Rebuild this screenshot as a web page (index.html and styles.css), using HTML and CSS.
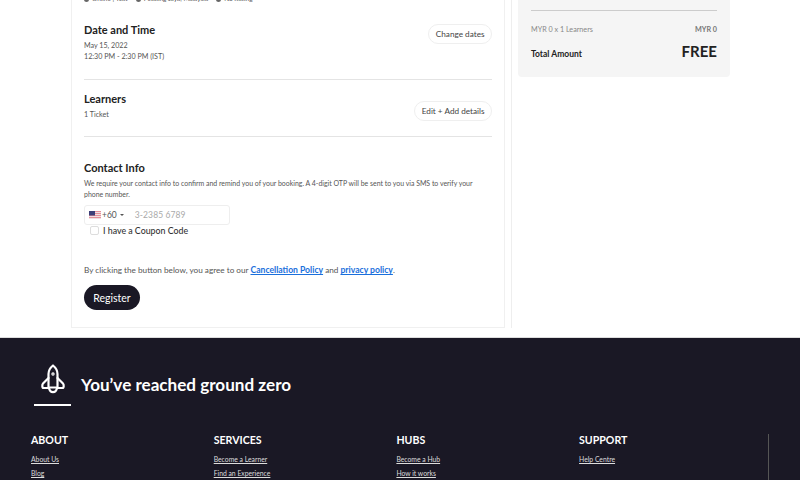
FILE: index.html
```html
<!DOCTYPE html>
<html lang="en">
<head>
<meta charset="utf-8">
<title>Booking</title>
<link rel="stylesheet" href="styles.css">
</head>
<body>
<div class="page">
  <main class="booking">
    <section class="form-card">
      <div class="meta">
        <span class="meta-item"><i class="dot"></i>Online | Text</span>
        <span class="meta-item"><i class="dot"></i>Petaling Jaya, Malaysia</span>
        <span class="meta-item"><i class="dot"></i>No Rating</span>
      </div>
      <div class="block block-date">
        <div>
          <h2>Date and Time</h2>
          <p class="small">May 15, 2022</p>
          <p class="small">12:30 PM - 2:30 PM (IST)</p>
        </div>
        <a class="pill pill-date">Change dates</a>
      </div>
      <div class="block block-learners">
        <div>
          <h2>Learners</h2>
          <p class="small ticket">1 Ticket</p>
        </div>
        <a class="pill pill-edit">Edit + Add details</a>
      </div>
      <div class="contact">
        <h2>Contact Info</h2>
        <p class="small note">We require your contact info to confirm and remind you of your booking. A 4-digit OTP will be sent to you via SMS to verify your phone number.</p>
        <div class="phone">
          <svg class="flag" width="12" height="8" viewBox="0 0 12 8" aria-hidden="true">
            <rect width="12" height="8" fill="#e58f99"/>
            <rect y="1" width="12" height="1" fill="#f3dfe0"/>
            <rect y="3" width="12" height="1" fill="#f3dfe0"/>
            <rect y="5" width="12" height="1" fill="#f3dfe0"/>
            <rect y="7" width="12" height="1" fill="#f3dfe0"/>
            <rect width="6" height="4.5" fill="#3d3f78"/>
          </svg>
          <span class="code">+60</span>
          <span class="caret"></span>
          <span class="placeholder">3-2385 6789</span>
        </div>
        <label class="coupon"><span class="box"></span>I have a Coupon Code</label>
        <p class="agree">By clicking the button below, you agree to our <a>Cancellation Policy</a> and <a>privacy policy</a>.</p>
        <button class="register" type="button">Register</button>
      </div>
    </section>
    <aside class="side">
      <div class="summary">
        <hr>
        <div class="row line">
          <span>MYR 0 x 1 Learners</span>
          <b>MYR 0</b>
        </div>
        <div class="row total">
          <b>Total Amount</b>
          <strong>FREE</strong>
        </div>
      </div>
    </aside>
  </main>
  <footer class="footer">
    <div class="brand">
      <div class="logo">
        <svg width="26" height="31" viewBox="0 0 26 31" fill="none" stroke="#fff" stroke-width="2.200" stroke-linejoin="round" stroke-linecap="round" aria-hidden="true">
          <path d="M13 1.500 C10.500 3.500 8.500 6.500 8.500 10 V23.500 H17.500 V10 C17.500 6.500 15.500 3.500 13 1.500 Z"/>
          <path d="M8.500 14 L3 19.500 C2 20.500 2 24 3.500 24 H8.500"/>
          <path d="M17.500 14 L23 19.500 C24 20.500 24 24 22.500 24 H17.500"/>
          <path d="M9 24 C10 29.500 16 29.500 17 24"/>
          <circle cx="13" cy="10" r="0.6"/>
        </svg>
        <span class="underline"></span>
      </div>
      <h1>You’ve reached ground zero</h1>
    </div>
    <nav class="links">
      <div class="col">
        <h3>ABOUT</h3>
        <a>About Us</a>
        <a>Blog</a>
      </div>
      <div class="col">
        <h3>SERVICES</h3>
        <a>Become a Learner</a>
        <a>Find an Experience</a>
      </div>
      <div class="col">
        <h3>HUBS</h3>
        <a>Become a Hub</a>
        <a>How it works</a>
      </div>
      <div class="col col-last">
        <h3>SUPPORT</h3>
        <a>Help Centre</a>
      </div>
    </nav>
  </footer>
</div>
</body>
</html>
```
FILE: styles.css
```css
* { box-sizing: border-box; }
html, body { margin: 0; padding: 0; }
body { font-family: Lato, "Open Sans", sans-serif; color: #222; background: #fff; }
.page { width: 800px; height: 480px; overflow: hidden; }

.booking { display: flex; height: 338px; padding-left: 71px; border-bottom: 1px solid #ddd; background: #fff; }
.form-card { width: 434px; height: 328px; border: 1px solid #f0f0f0; border-top: 0; padding: 0 12px; overflow: hidden; }
.meta { display: flex; gap: 8px; height: 6px; margin: -4px 0 20px; font-size: 6.500px; line-height: 6px; color: #555; }
.meta-item { display: flex; align-items: center; gap: 3px; }
.dot { width: 5px; height: 5px; border-radius: 50%; background: #666; }

h2 { margin: 0; font-size: 11px; line-height: 14px; font-weight: 700; color: #222; }
.small { margin: 0; font-size: 7.150px; line-height: 10.500px; color: #555; }

.block { display: flex; justify-content: space-between; border-bottom: 1px solid #e4e4e4; }
.block-date { height: 58px; padding-top: 1px; }
.block-date h2 { margin-bottom: 4px; }
.block-learners { height: 57px; padding-top: 12px; }
.block-learners h2 { margin-bottom: 4px; }
.pill { display: flex; align-items: center; height: 20px; padding: 0 6.500px; border: 1px solid #efefef; border-radius: 10px; font-size: 8.200px; color: #444; }
.pill-date { margin-top: 1px; }
.pill-edit { margin-top: 9px; }

.contact { padding-top: 24px; }
.note { margin-top: 3px; width: 395px; font-size: 6.950px; line-height: 11px; }
.phone { display: flex; align-items: center; width: 146px; height: 20px; margin-top: 5px; padding-left: 4px; border: 1px solid #eee; border-radius: 3px; font-size: 8.500px; }
.flag { display: block; }
.code { margin-left: 1px; color: #555; }
.caret { width: 0; height: 0; margin-left: 3px; border: 2px solid transparent; border-top: 2.500px solid #555; border-bottom: 0; }
.placeholder { margin-left: 11px; color: #aaa; letter-spacing: 0.1px; }
.coupon { display: flex; align-items: center; height: 11px; margin-top: 0; padding-left: 6px; font-size: 8.800px; font-weight: 500; color: #333; }
.box { width: 9px; height: 9px; margin-right: 4px; border: 1px solid #ddd; border-radius: 2px; }
.agree { margin: 29px 0 0; font-size: 8.200px; line-height: 11px; color: #555; }
.agree a { color: #1a6fdc; font-size: 8.600px; font-weight: 700; text-decoration: underline; }
.register { display: block; width: 56px; height: 25px; margin-top: 9px; padding: 0; border: 0; border-radius: 13px; background: #1a1825; color: #fff; font: 10.500px Lato, sans-serif; }

.side { height: 328px; margin-left: 6px; padding-left: 6px; border-left: 1px solid #eee; }
.summary { width: 212px; height: 77px; padding: 10px 13px 0; background: #f5f5f5; border-radius: 0 0 4px 4px; }
.summary hr { height: 1px; margin: 0; padding: 0; border: 0; background: #ccc; }
.row { display: flex; justify-content: space-between; }
.line { align-items: center; height: 12px; margin-top: 12px; font-size: 7.200px; color: #888; }
.line b { color: #777; font-weight: 700; }
.total { align-items: baseline; height: 22px; margin-top: 7px; font-size: 8.500px; color: #222; }
.total strong { font-size: 15px; font-weight: 700; }

.footer { height: 142px; background: #1a1825; color: #fff; padding: 0 31px; }
.brand { display: flex; height: 96px; }
.logo { display: flex; flex-direction: column; align-items: center; width: 37px; margin-left: 3px; padding-top: 26px; }
.logo svg { display: block; }
.underline { display: block; width: 37px; height: 2px; margin-top: 9px; background: #fff; }
.brand h1 { margin: 37px 0 0 10px; font-size: 17.100px; line-height: 20px; font-weight: 700; color: #fff; }
.links { display: grid; grid-template-columns: repeat(4, 182.700px); height: 46px; }
.col h3 { margin: 0 0 9px; font-size: 10.600px; line-height: 13px; font-weight: 700; color: #fff; }
.col a { display: block; margin-bottom: 7px; font-size: 6.800px; line-height: 7px; color: #ddd; text-decoration: underline; }
.col-last { border-right: 1px solid #555; margin-right: -7px; }
```
